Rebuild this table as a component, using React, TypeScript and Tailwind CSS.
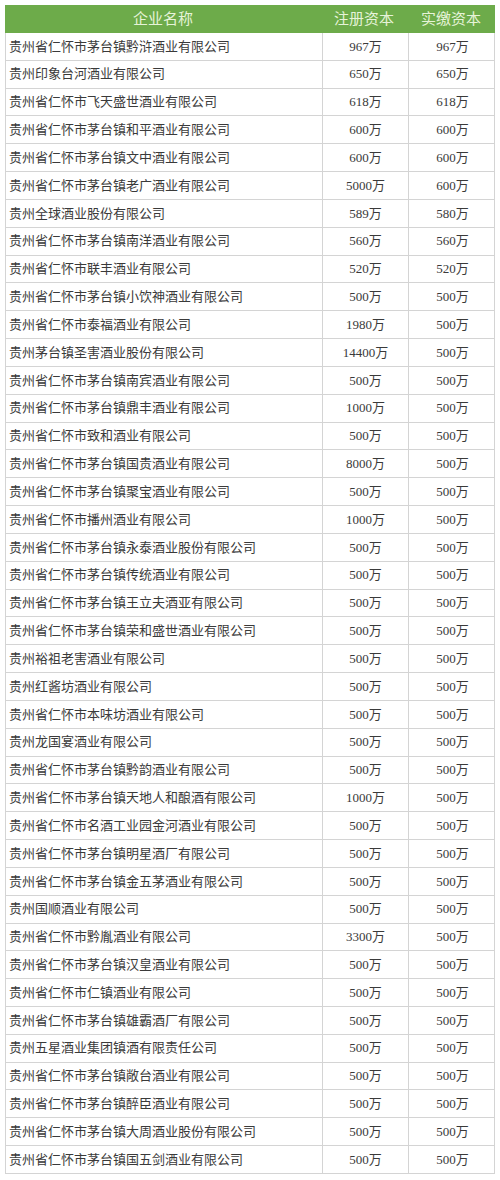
import React from "react";

const rows: [string, string, string][] = [
  ["贵州省仁怀市茅台镇黔浒酒业有限公司", "967万", "967万"],
  ["贵州印象台河酒业有限公司", "650万", "650万"],
  ["贵州省仁怀市飞天盛世酒业有限公司", "618万", "618万"],
  ["贵州省仁怀市茅台镇和平酒业有限公司", "600万", "600万"],
  ["贵州省仁怀市茅台镇文中酒业有限公司", "600万", "600万"],
  ["贵州省仁怀市茅台镇老广酒业有限公司", "5000万", "600万"],
  ["贵州全球酒业股份有限公司", "589万", "580万"],
  ["贵州省仁怀市茅台镇南洋酒业有限公司", "560万", "560万"],
  ["贵州省仁怀市联丰酒业有限公司", "520万", "520万"],
  ["贵州省仁怀市茅台镇小饮神酒业有限公司", "500万", "500万"],
  ["贵州省仁怀市泰福酒业有限公司", "1980万", "500万"],
  ["贵州茅台镇圣害酒业股份有限公司", "14400万", "500万"],
  ["贵州省仁怀市茅台镇南宾酒业有限公司", "500万", "500万"],
  ["贵州省仁怀市茅台镇鼎丰酒业有限公司", "1000万", "500万"],
  ["贵州省仁怀市致和酒业有限公司", "500万", "500万"],
  ["贵州省仁怀市茅台镇国贵酒业有限公司", "8000万", "500万"],
  ["贵州省仁怀市茅台镇聚宝酒业有限公司", "500万", "500万"],
  ["贵州省仁怀市播州酒业有限公司", "1000万", "500万"],
  ["贵州省仁怀市茅台镇永泰酒业股份有限公司", "500万", "500万"],
  ["贵州省仁怀市茅台镇传统酒业有限公司", "500万", "500万"],
  ["贵州省仁怀市茅台镇王立夫酒亚有限公司", "500万", "500万"],
  ["贵州省仁怀市茅台镇荣和盛世酒业有限公司", "500万", "500万"],
  ["贵州裕祖老害酒业有限公司", "500万", "500万"],
  ["贵州红酱坊酒业有限公司", "500万", "500万"],
  ["贵州省仁怀市本味坊酒业有限公司", "500万", "500万"],
  ["贵州龙国宴酒业有限公司", "500万", "500万"],
  ["贵州省仁怀市茅台镇黔韵酒业有限公司", "500万", "500万"],
  ["贵州省仁怀市茅台镇天地人和酿酒有限公司", "1000万", "500万"],
  ["贵州省仁怀市名酒工业园金河酒业有限公司", "500万", "500万"],
  ["贵州省仁怀市茅台镇明星酒厂有限公司", "500万", "500万"],
  ["贵州省仁怀市茅台镇金五茅酒业有限公司", "500万", "500万"],
  ["贵州国顺酒业有限公司", "500万", "500万"],
  ["贵州省仁怀市黔胤酒业有限公司", "3300万", "500万"],
  ["贵州省仁怀市茅台镇汉皇酒业有限公司", "500万", "500万"],
  ["贵州省仁怀市仁镇酒业有限公司", "500万", "500万"],
  ["贵州省仁怀市茅台镇雄霸酒厂有限公司", "500万", "500万"],
  ["贵州五星酒业集团镇酒有限责任公司", "500万", "500万"],
  ["贵州省仁怀市茅台镇敞台酒业有限公司", "500万", "500万"],
  ["贵州省仁怀市茅台镇醉臣酒业有限公司", "500万", "500万"],
  ["贵州省仁怀市茅台镇大周酒业股份有限公司", "500万", "500万"],
  ["贵州省仁怀市茅台镇国五剑酒业有限公司", "500万", "500万"],
];

const font = {
  fontFamily: '"Liberation Serif", "Noto Sans CJK SC", serif',
};

export default function App() {
  return (
    <div className="w-[500px] h-[1180px] bg-white pt-[5px] pl-[5px]" style={font}>
      <div className="w-[490px]">
        <div className="grid grid-cols-[316px_86px_88px] h-[28px] bg-[#6dab4a] text-[#e6f3d8] text-[15px] items-center">
          <div className="text-center">企业名称</div>
          <div className="text-center">注册资本</div>
          <div className="text-center">实缴资本</div>
        </div>
        {rows.map((r, i) => (
          <div
            key={i}
            className="grid grid-cols-[316px_86px_88px] h-[27.83px] border-x border-b border-[#d4d4d4] text-[13px] text-[#3a3a3a]"
          >
            <div className="flex items-center pl-[3px] whitespace-nowrap">{r[0]}</div>
            <div className="flex items-center justify-center border-l border-[#d4d4d4]">{r[1]}</div>
            <div className="flex items-center justify-center border-l border-[#d4d4d4]">{r[2]}</div>
          </div>
        ))}
      </div>
    </div>
  );
}
